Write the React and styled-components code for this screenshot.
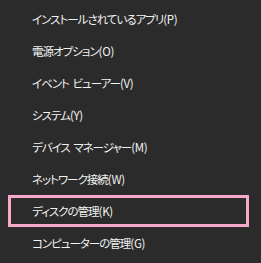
import React from "react";
import styled, { createGlobalStyle } from "styled-components";

const Global = createGlobalStyle`
  html, body { margin: 0; padding: 0; background: #2b2b2b; }
  #root { width: 261px; height: 263px; overflow: hidden; }
`;

const Menu = styled.ul`
  list-style: none;
  margin: 0;
  padding: 3px 0 0 0;
  width: 261px;
  height: 263px;
  box-sizing: border-box;
  background: #2b2b2b;
  font-family: "Noto Sans CJK JP", "Noto Sans", sans-serif;
  font-size: 11.5px;
  letter-spacing: -1px;
  word-spacing: 2px;
  font-feature-settings: "palt";
  color: #f2f2f2;
`;

const Item = styled.li`
  height: 32px;
  margin: 0 12px 0 8px;
  padding-left: 24px;
  display: flex;
  align-items: center;
  white-space: pre;
  box-shadow: ${(p) => (p.$highlighted ? "inset 0 0 0 3px #f5a8c9" : "none")};
`;

const Key = styled.span`
  letter-spacing: -0.3px;
`;

const items = [
  ["インストールされているアプリ", "(P)"],
  ["電源オプション", "(O)"],
  ["イベント ビューアー", "(V)"],
  ["システム", "(Y)"],
  ["デバイス マネージャー", "(M)"],
  ["ネットワーク接続", "(W)"],
  ["ディスクの管理", "(K)"],
  ["コンピューターの管理", "(G)"],
];

export default function App() {
  return (
    <>
      <Global />
      <Menu>
        {items.map(([t, k], i) => (
          <Item key={t} $highlighted={i === 6}>
            {t}
            <Key>{k}</Key>
          </Item>
        ))}
      </Menu>
    </>
  );
}
